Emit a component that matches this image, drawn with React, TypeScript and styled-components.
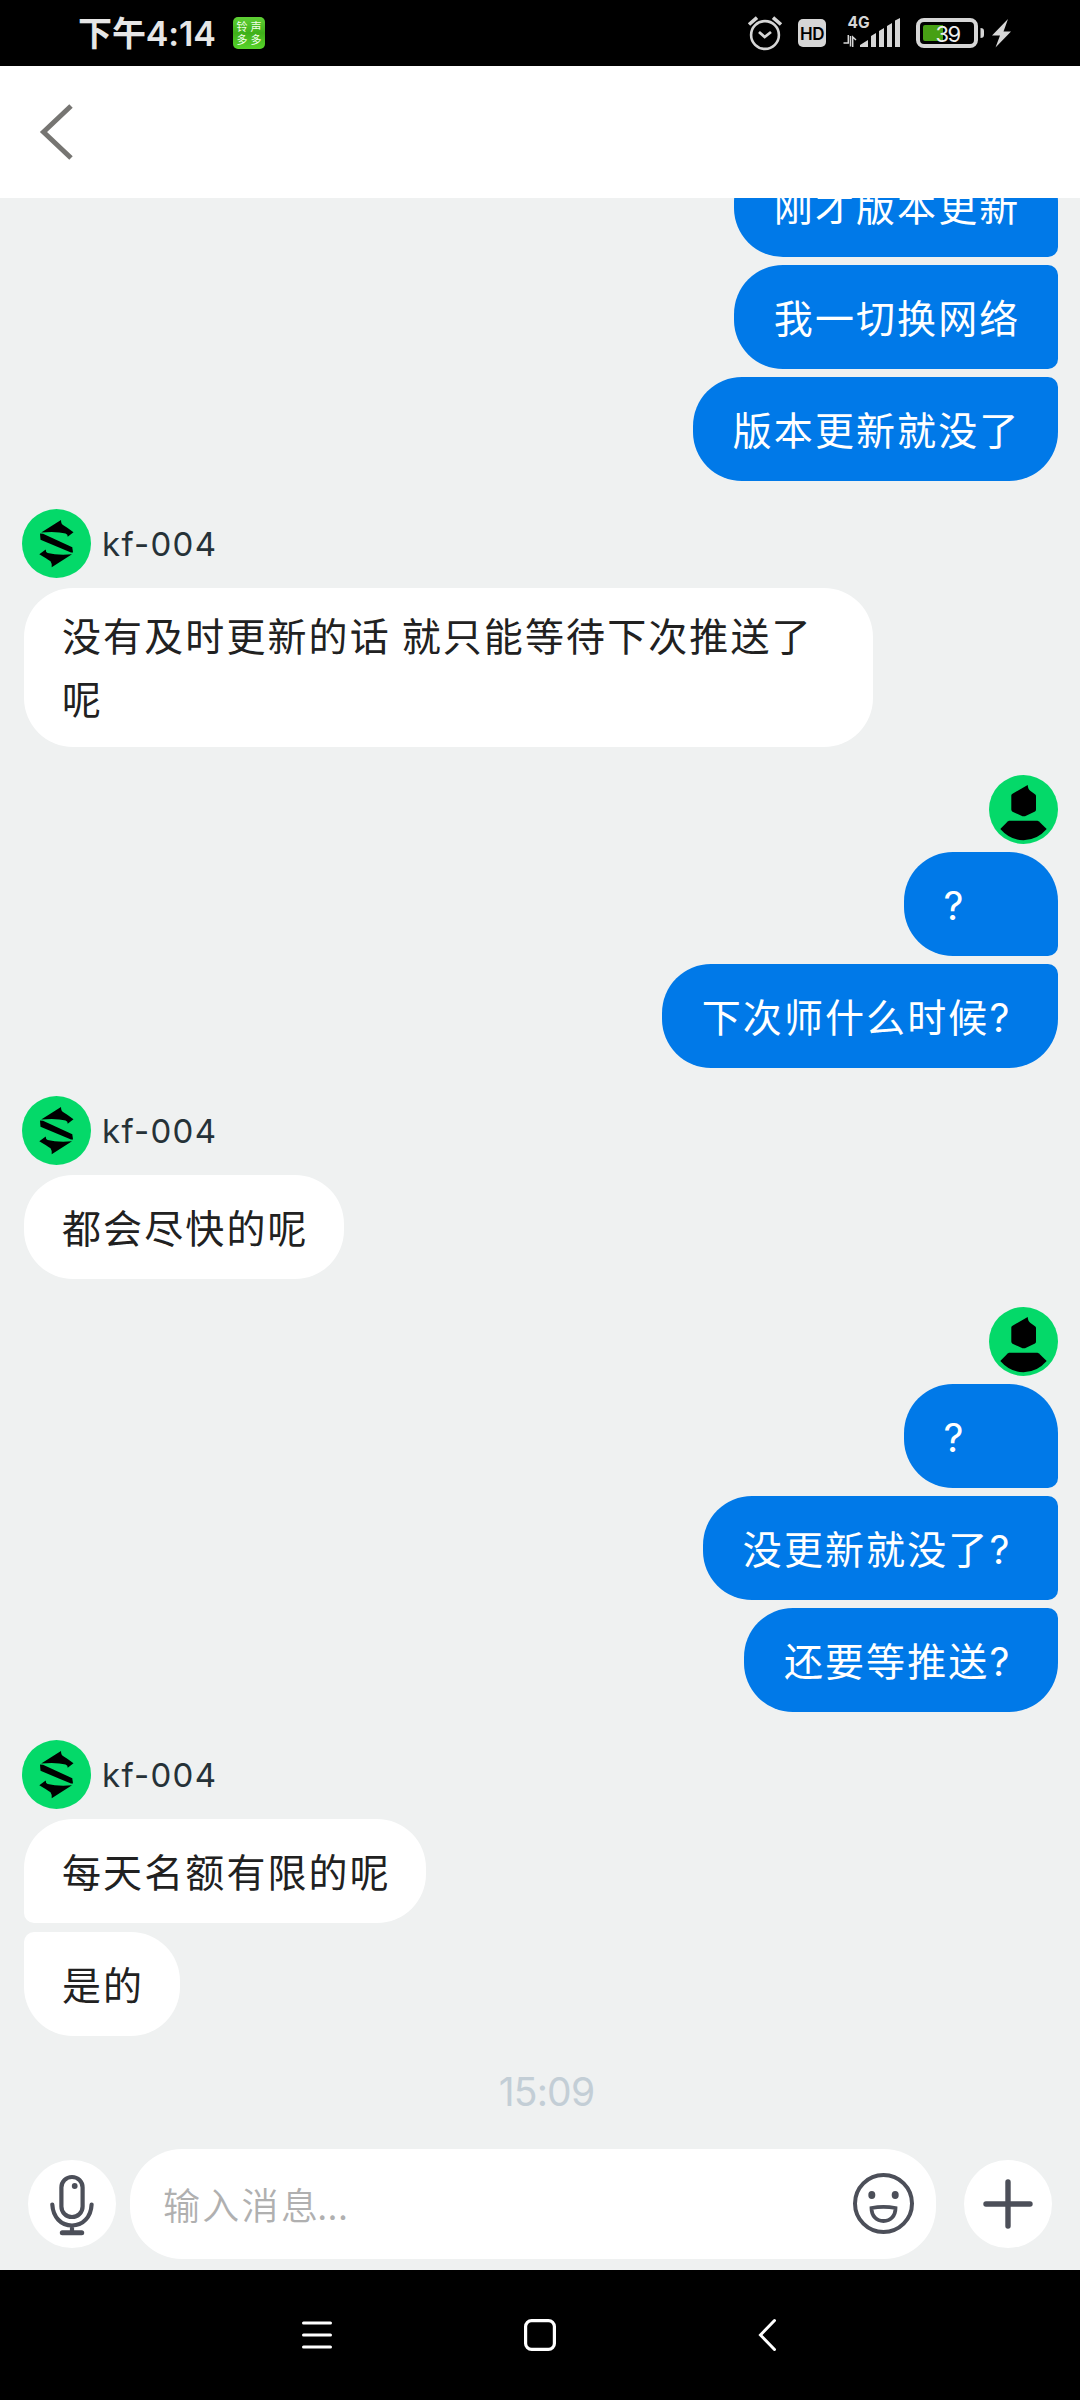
import React from "react";
import styled, { createGlobalStyle } from "styled-components";

const GlobalStyle = createGlobalStyle`
  * { box-sizing: border-box; }
  body { margin: 0; background: #000; }
  svg { display: block; }
`;

const Screen = styled.div`
  width: 1080px;
  height: 2400px;
  display: flex;
  flex-direction: column;
  overflow: hidden;
  background: #eff1f1;
  font-family: "Noto Sans CJK SC", "Noto Sans", sans-serif;
`;

const StatusBar = styled.header`
  height: 66px;
  flex: none;
  background: #000;
  display: flex;
  align-items: center;
  justify-content: space-between;
  padding: 0 68px 0 78px;
`;

const StatusLeft = styled.div`
  display: flex;
  align-items: center;
`;

const Clock = styled.span`
  width: 155px;
  padding-top: 2px;
  color: #e6e6e6;
  font-family: Inter, "Noto Sans CJK SC", sans-serif;
  font-size: 34px;
  font-weight: 600;
  line-height: 66px;
  letter-spacing: -0.1px;
  white-space: nowrap;
`;

const AppBadge = styled.div`
  width: 32px;
  height: 32px;
  border-radius: 5px;
  background: linear-gradient(#5fd035, #3fb01a 50%, #57d42a);
  color: #f2ffe8;
  display: grid;
  grid-template-columns: 14px 14px;
  grid-template-rows: 13px 13px;
  place-content: center;
  place-items: center;
  font-size: 11px;
  line-height: 13px;
`;

const TitleBar = styled.div`
  height: 132px;
  flex: none;
  background: #fff;
  display: flex;
  align-items: center;
  padding-left: 38px;
`;

const Conversation = styled.main`
  height: 1951px;
  flex: none;
  overflow: hidden;
  display: flex;
  flex-direction: column;
`;

const Thread = styled.div`
  margin-top: -45px;
  display: flex;
  flex-direction: column;
  gap: 28px;
`;

const Group = styled.section<{ $mine?: boolean }>`
  display: flex;
  flex-direction: column;
  align-items: ${(p) => (p.$mine ? "flex-end" : "flex-start")};
  padding: 0 22px;
`;

const Sender = styled.div<{ $mine?: boolean }>`
  height: 69px;
  display: flex;
  align-items: center;
  gap: 11px;
  margin-bottom: ${(p) => (p.$mine ? 8 : 10)}px;
`;

const SenderName = styled.span`
  padding-top: 2px;
  color: #263238;
  font-family: Inter, "Noto Sans CJK SC", sans-serif;
  font-size: 33px;
  font-weight: 400;
  line-height: 69px;
  letter-spacing: 1.3px;
`;

const Stack = styled.div<{ $mine?: boolean }>`
  display: flex;
  flex-direction: column;
  align-items: ${(p) => (p.$mine ? "flex-end" : "flex-start")};
  gap: ${(p) => (p.$mine ? 8 : 9)}px;
`;

const Bubble = styled.div<{ $mine?: boolean; $joinTop?: boolean; $joinBottom?: boolean; $multi?: boolean }>`
  color: ${(p) => (p.$mine ? "#fff" : "#212121")};
  background: ${(p) => (p.$mine ? "#0079e8" : "#fff")};
  min-width: ${(p) => (p.$mine ? 154 : 120)}px;
  max-width: 849px;
  margin-left: ${(p) => (p.$mine ? 0 : 2)}px;
  height: ${(p) => (p.$multi ? 159 : 104)}px;
  padding: ${(p) => (p.$multi ? 15 : 20)}px ${(p) => (p.$mine ? 37.6 : 35.5)}px 0 ${(p) => (p.$mine ? 39.6 : 38)}px;
  font-size: 39px;
  line-height: ${(p) => (p.$multi ? 62.5 : 63)}px;
  letter-spacing: 2.1px;
  border-radius: ${(p) => {
    const top = p.$joinTop ? 10 : 49;
    const bottom = p.$joinBottom ? 10 : 49;
    return p.$mine ? `49px ${top}px ${bottom}px 49px` : `${top}px 49px 49px ${bottom}px`;
  }};
`;

const QuestionMark = styled.span`
  display: inline-block;
  width: 31px;
  font-family: Inter, sans-serif;
  letter-spacing: 0;
`;

const TimeStamp = styled.time`
  margin-top: 28px;
  align-self: center;
  padding-left: 13px;
  color: #c3ced6;
  font-family: Inter, sans-serif;
  font-size: 39px;
  line-height: 56px;
  font-weight: 400;
  letter-spacing: -0.8px;
`;

const Composer = styled.div`
  height: 121px;
  flex: none;
  display: flex;
  align-items: center;
  padding: 0 28px 11px;
`;

const RoundButton = styled.button`
  width: 88px;
  height: 88px;
  padding: 0;
  border: 0;
  border-radius: 50%;
  background: #fff;
  flex: none;
`;

const InputField = styled.div`
  width: 806px;
  height: 110px;
  margin: 0 28px 0 14px;
  border-radius: 52px;
  background: #fff;
  display: flex;
  align-items: center;
  justify-content: space-between;
  padding: 0 22px 0 33px;
`;

const Placeholder = styled.span`
  color: #b0b0b0;
  font-size: 37px;
  font-weight: 350;
  letter-spacing: 2.3px;
  line-height: 110px;
`;

const Ellipsis = styled.span`
  margin-left: -3px;
  letter-spacing: 0.4px;
`;

const NavBar = styled.nav`
  height: 130px;
  flex: none;
  background: #000;
  display: grid;
  grid-template-columns: 223px 234px 22px;
  align-items: center;
  padding-left: 300px;
`;

const SupportAvatar = () => (
  <svg width="69" height="69" viewBox="0 0 69 69">
    <circle cx="34.5" cy="34.5" r="34.5" fill="#04d969" />
    <path d="M39 11Q39 15 41 16Q46 19 51.5 23.3L45.7 27.7Q46 25.5 43.5 24.5Q35 22 19.2 23.4Z" />
    <path d="M18 24.5L21 24.7L50.3 38.2L51 43.6H49L18.5 30.8Z" />
    <path d="M23.7 40.5L17.3 45.3Q25 50 28.5 52.2Q30 54 29.7 58.3L50 45.3Q35 46.4 25.7 44Q23.5 43 23.7 40.5Z" />
  </svg>
);

const UserAvatar = () => (
  <svg width="69" height="69" viewBox="0 0 69 69">
    <circle cx="34.5" cy="34.5" r="34.5" fill="#04d969" />
    <path d="M38.7 10L23.5 18.7Q22.3 19.4 22.3 20.5V34.5Q22.3 36 23.5 36.7L33.5 41.3H36L46 36.5Q47 36 47 34.5V21Q47 19.8 46 19.2L41.5 16Q39 14.5 38.7 10Z" />
    <path d="M20 45.7H48.5L50 46.5L57.7 54Q48 65.2 34.5 65.2Q21 65.2 11.3 54L18.7 46.5Z" />
  </svg>
);

const StatusIcons = () => (
  <svg width="266" height="66" viewBox="746 0 266 66" fill="none" stroke="#d6d6d6">
    <circle cx="765" cy="35" r="13.9" strokeWidth="2.6" />
    <path d="M749 24.5L757 17.6M773 17.6L781 24.5" strokeWidth="3.6" />
    <path d="M759 32L764.7 37L771 32" strokeWidth="2.8" />
    <rect x="798" y="19" width="28" height="28" rx="5" fill="#d6d6d6" stroke="none" />
    <text x="812" y="39.5" textAnchor="middle" fontFamily="Inter" fontWeight="600" fontSize="17" letterSpacing="-0.6" fill="#000" stroke="none">HD</text>
    <text x="858.5" y="28" textAnchor="middle" fontFamily="Inter" fontWeight="700" fontSize="15.5" fill="#d6d6d6" stroke="none">4G</text>
    <path d="M843.5 43H848.3V35M850.5 46.5V36M852.7 47V37L856 40" strokeWidth="1.5" />
    <path d="M860 47V45L868 40V47ZM871 47V36L876 33V47ZM879 47V31L884 28V47ZM887 47V26L892 23V47ZM895 47V20.5L900 18V47Z" fill="#d6d6d6" stroke="none" />
    <rect x="918" y="20" width="58" height="26" rx="6" strokeWidth="4" />
    <path d="M925 25H943V41H925Q923 41 923 39V27Q923 25 925 25Z" fill="#47a014" stroke="none" />
    <text x="947.5" y="41.5" textAnchor="middle" fontFamily="Inter" fontSize="22" letterSpacing="-1.6" fill="#eee" stroke="none">39</text>
    <path d="M980.5 28Q984 28 984 31V35Q984 38 980.5 38Z" fill="#d6d6d6" stroke="none" />
    <path d="M1008 19L992 35.5H1000L995.5 47.5L1011 31.5H1003.5Z" fill="#d6d6d6" stroke="none" />
  </svg>
);

const BackArrow = () => (
  <svg width="36" height="60" viewBox="0 0 36 60" fill="none" stroke="#767572" strokeWidth="5">
    <path d="M33 4L5.5 30L33 56" />
  </svg>
);

const MicIcon = () => (
  <svg width="88" height="88" viewBox="28 2160 88 88" fill="none" stroke="#4c4f59" strokeWidth="4.2" strokeLinecap="round">
    <rect x="61.4" y="2177" width="21.2" height="40" rx="10.6" />
    <path d="M52.3 2204.5C53 2217 61 2225.5 72 2225.5S91 2217 91.6 2204.5M72 2226V2232" />
    <path d="M62.3 2232.7H81.7" strokeWidth="5" />
    <circle cx="74.7" cy="2186" r="2.9" fill="#4c4f59" stroke="none" />
  </svg>
);

const SmileIcon = () => (
  <svg width="61" height="62" viewBox="0 0 61 62" fill="none" stroke="#4c4f59" strokeWidth="4">
    <circle cx="30.5" cy="30.5" r="28.5" />
    <ellipse cx="18.8" cy="22" rx="3.5" ry="4" fill="#4c4f59" stroke="none" />
    <ellipse cx="42.2" cy="22" rx="3.5" ry="4" fill="#4c4f59" stroke="none" />
    <path d="M18.5 35Q30.5 32.8 42.5 35C42.5 43 37.5 48 30.5 48S18.5 43 18.5 35Z" strokeWidth="3.8" />
  </svg>
);

const PlusIcon = () => (
  <svg width="88" height="88" viewBox="0 0 88 88" stroke="#4c4f59" strokeWidth="5.4" strokeLinecap="round">
    <path d="M22 44H66M44 22V66" />
  </svg>
);

const MenuIcon = () => (
  <svg width="34" height="34" viewBox="0 0 34 34" stroke="#fff" strokeWidth="3" strokeLinecap="round">
    <path d="M3.5 5H30.5M3.5 17H30.5M3.5 29H30.5" />
  </svg>
);

const HomeIcon = () => (
  <svg width="34" height="34" viewBox="0 0 34 34" fill="none" stroke="#fff" strokeWidth="3.2">
    <rect x="2.6" y="2.6" width="28.8" height="28.8" rx="6" />
  </svg>
);

const NavBackIcon = () => (
  <svg width="22" height="34" viewBox="0 0 22 34" fill="none" stroke="#fff" strokeWidth="3" strokeLinecap="round">
    <path d="M17.5 2.5L3.5 17L17.5 31.5" />
  </svg>
);

interface Message {
  text: string;
  multi?: boolean;
}

interface MessageGroup {
  mine?: boolean;
  continued?: boolean;
  messages: Message[];
}

const groups: MessageGroup[] = [
  { mine: true, continued: true, messages: [{ text: "刚才版本更新" }, { text: "我一切换网络" }, { text: "版本更新就没了" }] },
  { messages: [{ text: "没有及时更新的话 就只能等待下次推送了呢", multi: true }] },
  { mine: true, messages: [{ text: "?" }, { text: "下次师什么时候?" }] },
  { messages: [{ text: "都会尽快的呢" }] },
  { mine: true, messages: [{ text: "?" }, { text: "没更新就没了?" }, { text: "还要等推送?" }] },
  { messages: [{ text: "每天名额有限的呢" }, { text: "是的" }] },
];

const MessageText = ({ text }: { text: string }) =>
  text.endsWith("?") ? (
    <>
      {text.slice(0, -1)}
      <QuestionMark>?</QuestionMark>
    </>
  ) : (
    <>{text}</>
  );

export default function App() {
  return (
    <>
      <GlobalStyle />
      <Screen>
        <StatusBar>
          <StatusLeft>
            <Clock>下午4:14</Clock>
            <AppBadge>
              <span>铃</span>
              <span>声</span>
              <span>多</span>
              <span>多</span>
            </AppBadge>
          </StatusLeft>
          <StatusIcons />
        </StatusBar>
        <TitleBar>
          <BackArrow />
        </TitleBar>
        <Conversation>
          <Thread>
            {groups.map((group, g) => (
              <Group key={g} $mine={group.mine}>
                {!group.continued && (
                  <Sender $mine={group.mine}>
                    {group.mine ? <UserAvatar /> : <SupportAvatar />}
                    {!group.mine && <SenderName>kf-004</SenderName>}
                  </Sender>
                )}
                <Stack $mine={group.mine}>
                  {group.messages.map((m, i) => (
                    <Bubble
                      key={i}
                      $mine={group.mine}
                      $multi={m.multi}
                      $joinTop={i > 0}
                      $joinBottom={i < group.messages.length - 1}
                    >
                      <MessageText text={m.text} />
                    </Bubble>
                  ))}
                </Stack>
              </Group>
            ))}
          </Thread>
          <TimeStamp>15:09</TimeStamp>
        </Conversation>
        <Composer>
          <RoundButton aria-label="语音">
            <MicIcon />
          </RoundButton>
          <InputField>
            <Placeholder>
              输入消息<Ellipsis>...</Ellipsis>
            </Placeholder>
            <SmileIcon />
          </InputField>
          <RoundButton aria-label="更多">
            <PlusIcon />
          </RoundButton>
        </Composer>
        <NavBar>
          <MenuIcon />
          <HomeIcon />
          <NavBackIcon />
        </NavBar>
      </Screen>
    </>
  );
}
